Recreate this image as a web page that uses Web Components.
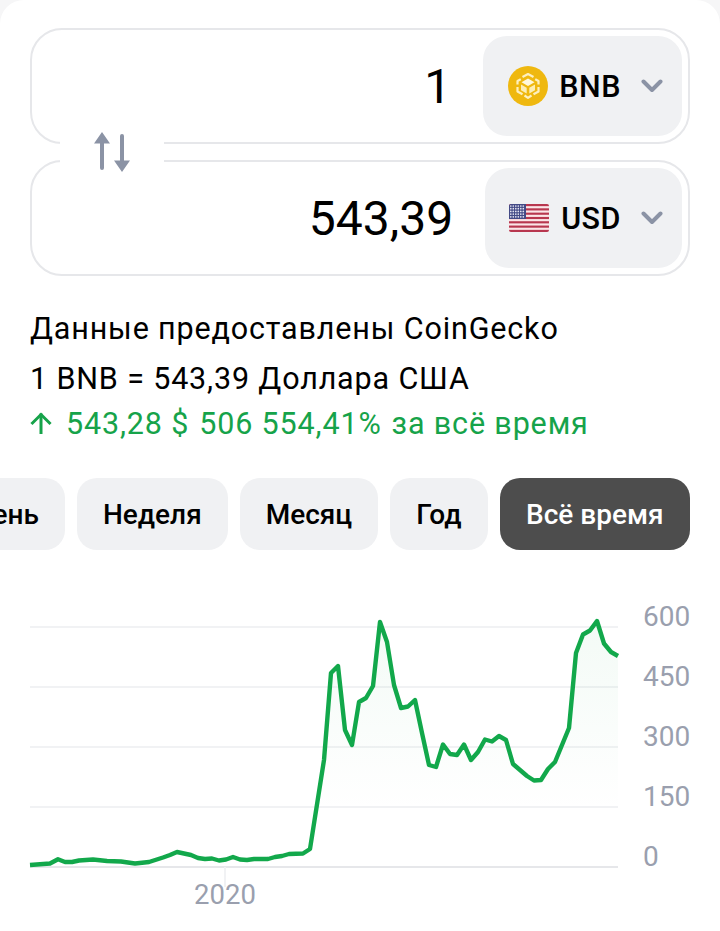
<!DOCTYPE html>
<html lang="ru">
<head>
<meta charset="utf-8">
<title>BNB USD</title>
<style>
  html, body { margin: 0; background: #f6f6f7; }
  body { font-family: Roboto, "Noto Sans", sans-serif; color: #000; overflow: hidden; height: 931px; }
</style>
</head>
<body>
<app-card>
  <converter-box>
    <converter-row value="1">
      <currency-select code="BNB"><coin-bnb slot="icon"></coin-bnb></currency-select>
    </converter-row>
    <converter-row value="543,39">
      <currency-select code="USD"><flag-usa slot="icon"></flag-usa></currency-select>
    </converter-row>
  </converter-box>
  <rate-info></rate-info>
  <period-tabs>
    <period-tab>День</period-tab>
    <period-tab>Неделя</period-tab>
    <period-tab>Месяц</period-tab>
    <period-tab>Год</period-tab>
    <period-tab active>Всё время</period-tab>
  </period-tabs>
  <price-chart></price-chart>
</app-card>

<script>
class AppCard extends HTMLElement {
  constructor() {
    super();
    this.attachShadow({mode: 'open'}).innerHTML = `
      <style>
        :host { display: block; background: #fff; border-radius: 24px 24px 0 0; padding: 28px 30px 0; height: 903px; }
      </style>
      <slot></slot>`;
  }
}

class ConverterBox extends HTMLElement {
  constructor() {
    super();
    this.attachShadow({mode: 'open'}).innerHTML = `
      <style>
        :host { display: flex; flex-direction: column; gap: 16px; position: relative; }
        .swap { position: absolute; left: 30px; top: 106px; width: 104px; height: 36px; background: #fff;
                display: flex; align-items: center; justify-content: center; }
        svg { display: block; }
      </style>
      <slot></slot>
      <div class="swap">
        <svg width="36" height="40" viewBox="0 0 36 40" fill="#8b93a5">
          <path d="M8 0 L16 11.5 H10 V36 a2 2 0 0 1 -4 0 V11.5 H0 Z"/>
          <path d="M28 40 L20 28.5 H26 V4 a2 2 0 0 1 4 0 V28.5 H36 Z"/>
        </svg>
      </div>`;
  }
}

class ConverterRow extends HTMLElement {
  constructor() {
    super();
    this.attachShadow({mode: 'open'}).innerHTML = `
      <style>
        :host { display: flex; align-items: center; justify-content: flex-end; box-sizing: border-box; height: 116px;
                border: 2px solid #e6e7ea; border-radius: 32px; padding: 0 6px; }
        .value { font-size: 48px; line-height: 56px; padding-top: 1px; padding-right: 32px; }
      </style>
      <div class="value"></div>
      <slot></slot>`;
    this.shadowRoot.querySelector('.value').textContent = this.getAttribute('value');
  }
}

class CurrencySelect extends HTMLElement {
  constructor() {
    super();
    this.attachShadow({mode: 'open'}).innerHTML = `
      <style>
        :host { display: flex; align-items: center; height: 100px; box-sizing: border-box; padding: 0 19px 0 24px;
                background: #f0f1f3; border-radius: 24px; }
        .code { font-size: 30.500px; font-weight: 500; letter-spacing: 0.500px; margin-left: 12px; margin-right: 20px; }
        svg { display: block; }
      </style>
      <slot name="icon"></slot>
      <span class="code"></span>
      <svg width="22" height="14" viewBox="0 0 22 14" fill="none" stroke="#8b93a5" stroke-width="4" stroke-linecap="round" stroke-linejoin="round">
        <path d="M2.500 2.500 L11 11 L19.500 2.500"/>
      </svg>`;
    this.shadowRoot.querySelector('.code').textContent = this.getAttribute('code');
  }
}

class CoinBnb extends HTMLElement {
  constructor() {
    super();
    this.attachShadow({mode: 'open'}).innerHTML = `
      <style>:host { display: block; width: 40px; height: 40px; margin-left: 1px; margin-right: -1px; } svg { display: block; }</style>
      <svg width="40" height="40" viewBox="0 0 40 40">
        <circle cx="20" cy="20" r="20" fill="#efb80f"/>
        <g fill="none" stroke="#fdf0c0" stroke-width="2.200" stroke-linejoin="round">
          <path d="M14.500 11 L20 8 L25.500 11"/>
          <path d="M9.500 18.500 V15 L12.800 13.200"/>
          <path d="M30.500 18.500 V15 L27.200 13.200"/>
          <path d="M9.500 21 V25.500 L14.500 28.300"/>
          <path d="M30.500 21 V25.500 L25.500 28.300"/>
          <path d="M16.500 29.500 L20 31.800 L23.500 29.500"/>
        </g>
        <path d="M20 12.500 L26.500 16.200 L20 20 L13.500 16.200 Z" fill="#fff8dc"/>
        <path d="M13 18.500 L18.700 21.800 V27.500 L13 24.200 Z M27 18.500 L21.300 21.800 V27.500 L27 24.200 Z" fill="#fdeeb5"/>
      </svg>`;
  }
}

class FlagUsa extends HTMLElement {
  constructor() {
    super();
    let stripes = '';
    for (let i = 0; i < 13; i += 2) {
      stripes += `<rect x="0" y="${(i * 28 / 13).toFixed(2)}" width="40" height="${(28 / 13).toFixed(2)}" fill="#b8374f"/>`;
    }
    let stars = '';
    for (let r = 0; r < 5; r++) {
      for (let c = 0; c < 6; c++) {
        stars += `<circle cx="${1.8 + c * 2.5}" cy="${2 + r * 2.7}" r="0.85" fill="#e6e6f2"/>`;
      }
    }
    this.attachShadow({mode: 'open'}).innerHTML = `
      <style>:host { display: block; width: 40px; height: 28px; } svg { display: block; border-radius: 2px; }</style>
      <svg width="40" height="28" viewBox="0 0 40 28">
        <rect width="40" height="28" fill="#fbe6e8"/>
        ${stripes}
        <rect width="17" height="15" fill="#434a86"/>
        ${stars}
      </svg>`;
  }
}

class RateInfo extends HTMLElement {
  constructor() {
    super();
    this.attachShadow({mode: 'open'}).innerHTML = `
      <style>
        :host { display: block; font-size: 30.500px; letter-spacing: 0.850px; margin-top: 28px; }
        .line { line-height: 50px; }
        .change { display: flex; align-items: center; gap: 10px; height: 38px; color: #16a34a; }
        .up { display: flex; align-items: center; gap: 14px; }
        svg { display: block; }
      </style>
      <div class="line">Данные предоставлены CoinGecko</div>
      <div class="line">1 BNB = 543,39 Доллара США</div>
      <div class="change">
        <span class="up">
          <svg width="22" height="22" viewBox="0 0 22 22" fill="none" stroke="#16a34a" stroke-width="3" stroke-linecap="square">
            <path d="M11 20.500 V3"/><path d="M2.500 11 L11 2.500 L19.500 11"/>
          </svg>
          <span>543,28 $</span>
        </span>
        <span>506 554,41%</span>
        <span>за всё время</span>
      </div>`;
  }
}

class PeriodTabs extends HTMLElement {
  constructor() {
    super();
    this.attachShadow({mode: 'open'}).innerHTML = `
      <style>
        :host { display: flex; justify-content: flex-end; gap: 12px; margin: 36px -30px 0; padding-right: 30px; overflow: hidden; }
      </style>
      <slot></slot>`;
  }
}

class PeriodTab extends HTMLElement {
  constructor() {
    super();
    this.attachShadow({mode: 'open'}).innerHTML = `
      <style>
        :host { display: flex; flex: none; align-items: center; height: 72px; padding: 0 26px; box-sizing: border-box;
                background: #f0f1f3; border-radius: 20px; font-size: 28px; font-weight: 500; color: #000; }
        :host([active]) { background: #4d4d4d; color: #fff; padding: 0 26.500px; }
      </style>
      <slot></slot>`;
  }
}

const PRICE_POINTS = [
  [30,865],[50,863.5],[58,859.3],[65,862],[72,862],[79,860.5],[93,859.5],[107,861],[121,861.5],[135,863.5],
  [149,862],[163,857.5],[170,855],[177,852],[191,855],[198,858],[205,859],[212,858.5],[219,860.5],[226,859.5],
  [233,857],[240,859.5],[247,860],[254,859],[268,859],[275,857],[282,856],[289,854],[303,853.5],[310,849],
  [324,760],[331,673],[338,666],[345,730],[352,745],[359,702],[366,698],[373,686],[380,622],[387,642],
  [394,685],[401,708],[408,706.5],[415,700],[422,733],[429,765],[436,767],[443,744.5],[450,754],[457,755],
  [464,744.5],[471,760],[478,752],[485,739.5],[492,741.5],[499,736],[506,740],[513,764],[520,770],[527,776],
  [534,780.5],[541,780],[548,769],[555,762],[562,745],[569,728],[576,653],[583,634.5],[590,630.5],[597,621],
  [604,643.5],[611,652],[618,656]
];

class PriceChart extends HTMLElement {
  constructor() {
    super();
    // svg sits at x=30, y=586 on the page
    const pts = PRICE_POINTS.map(p => [p[0] - 30, p[1] - 586]);
    const line = 'M' + pts.map(p => p.join(' ')).join(' L');
    const grid = [41, 101, 161, 221].map(y =>
      `<line x1="0" x2="588" y1="${y}" y2="${y}" stroke="#f1f2f4" stroke-width="2"/>`).join('');
    this.attachShadow({mode: 'open'}).innerHTML = `
      <style>
        :host { display: grid; grid-template-columns: 588px 1fr; grid-template-rows: 293px auto; column-gap: 25px; margin-top: 36px; margin-right: -30px; }
        svg { display: block; overflow: visible; }
        .axis { display: flex; flex-direction: column; padding-top: 1px; color: #9a9fae; font-size: 28px; }
        .axis span { flex: none; height: 60px; line-height: 60px; }
        .years { position: relative; height: 32px; color: #9a9fae; font-size: 27.500px; line-height: 32px; }
        .years span { position: absolute; left: 195px; transform: translateX(-50%); top: 0; }
      </style>
      <svg width="588" height="293" viewBox="0 0 588 293">
        <defs>
          <linearGradient id="fade" x1="0" y1="36" x2="0" y2="225" gradientUnits="userSpaceOnUse">
            <stop offset="0" stop-color="#16a34a" stop-opacity="0.05"/>
            <stop offset="1" stop-color="#16a34a" stop-opacity="0"/>
          </linearGradient>
        </defs>
        ${grid}
        <line x1="0" x2="588" y1="281" y2="281" stroke="#e6e7ea" stroke-width="2"/>
        <line x1="195" x2="195" y1="281" y2="301" stroke="#f1f2f4" stroke-width="2"/>
        <path d="${line} L588 281 L0 281 Z" fill="url(#fade)"/>
        <path d="${line}" fill="none" stroke="#12a84b" stroke-width="4.400" stroke-linejoin="round"/>
      </svg>
      <div class="axis"><span>600</span><span>450</span><span>300</span><span>150</span><span>0</span></div>
      <div class="years"><span>2020</span></div>`;
  }
}

customElements.define('app-card', AppCard);
customElements.define('converter-box', ConverterBox);
customElements.define('converter-row', ConverterRow);
customElements.define('currency-select', CurrencySelect);
customElements.define('coin-bnb', CoinBnb);
customElements.define('flag-usa', FlagUsa);
customElements.define('rate-info', RateInfo);
customElements.define('period-tabs', PeriodTabs);
customElements.define('period-tab', PeriodTab);
customElements.define('price-chart', PriceChart);
</script>
</body>
</html>
